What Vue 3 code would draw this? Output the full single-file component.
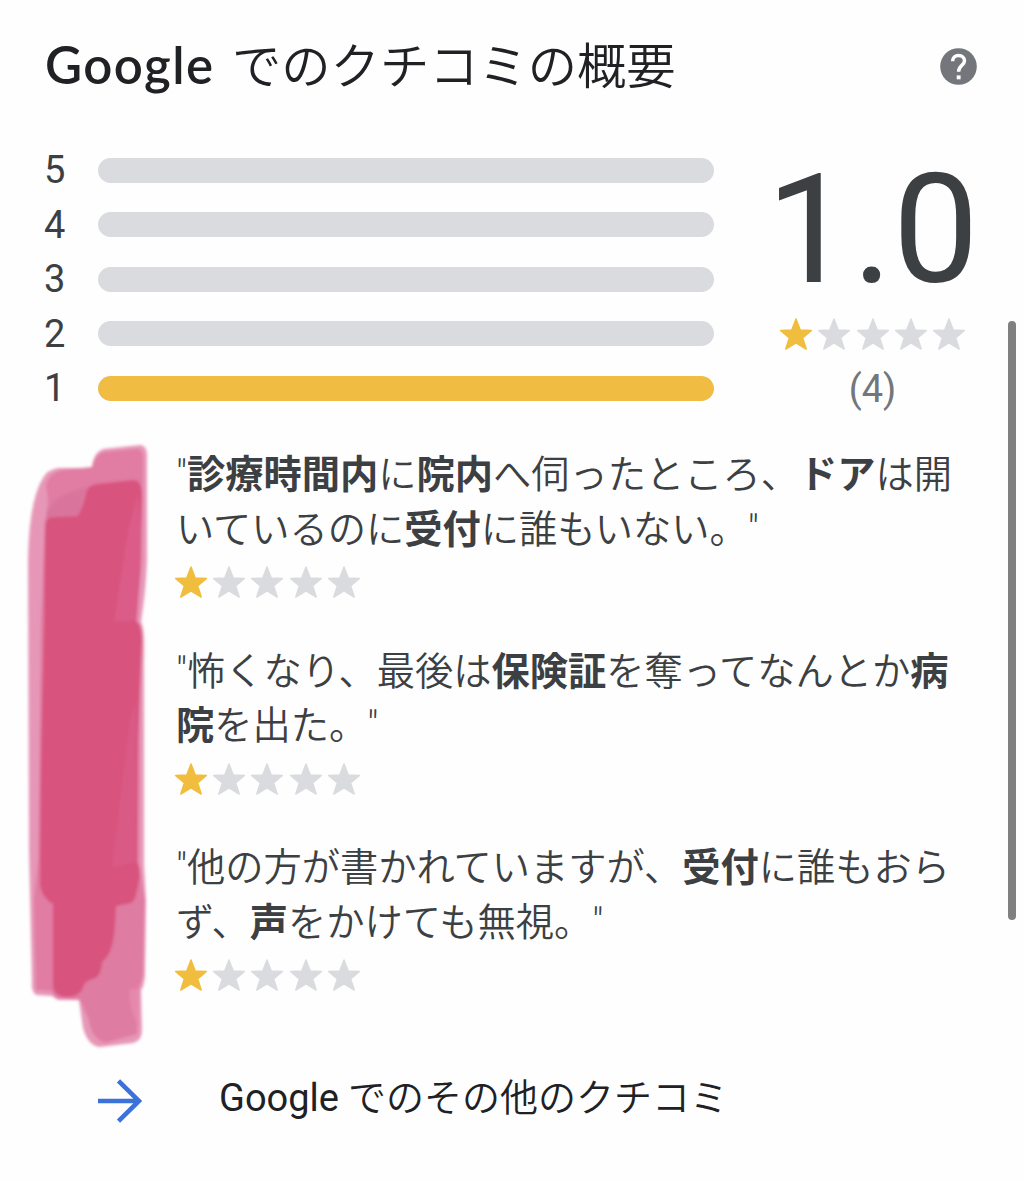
<script setup>
import { h } from 'vue'

const bars = [
  { label: 5, fill: 0 },
  { label: 4, fill: 0 },
  { label: 3, fill: 0 },
  { label: 2, fill: 0 },
  { label: 1, fill: 100 },
]

// Each line is a list of runs; runs with b: true are highlighted keywords.
const reviews = [
  [
    [{ t: '"' }, { t: '診療時間内', b: true }, { t: 'に' }, { t: '院内', b: true }, { t: 'へ伺ったところ、' }, { t: 'ドア', b: true }, { t: 'は開' }],
    [{ t: 'いているのに' }, { t: '受付', b: true }, { t: 'に誰もいない。"' }],
  ],
  [
    [{ t: '"怖くなり、最後は' }, { t: '保険証', b: true }, { t: 'を奪ってなんとか' }, { t: '病', b: true }],
    [{ t: '院', b: true }, { t: 'を出た。"' }],
  ],
  [
    [{ t: '"他の方が書かれていますが、' }, { t: '受付', b: true }, { t: 'に誰もおら' }],
    [{ t: 'ず、' }, { t: '声', b: true }, { t: 'をかけても無視。"' }],
  ],
]

const starPath =
  'M16 1 L20.2 12.1 L31.4 12.5 L22.6 19.8 L26.2 31 L16 24.8 L5.8 31 L9.4 19.8 L.6 12.5 L11.8 12.1 Z'

const Stars = () =>
  h(
    'div',
    { style: { display: 'flex', gap: '6.2px' }, role: 'img' },
    [1, 2, 3, 4, 5].map((n) =>
      h('svg', { width: 32, height: 32, viewBox: '0 0 32 32', style: { display: 'block', overflow: 'visible' } }, [
        h('path', {
          d: starPath,
          fill: n <= 1 ? '#f1bd3e' : '#dadbdf',
          stroke: n <= 1 ? '#f1bd3e' : '#dadbdf',
          'stroke-width': 1.5,
          'stroke-linejoin': 'round',
        }),
      ])
    )
  )
</script>

<template>
  <main class="page">
    <header class="header">
      <h1 class="title"><span class="brand">Google</span><span class="kana">でのクチコミの概要</span></h1>
      <svg class="help" width="37" height="37" viewBox="0 0 37 37">
        <circle cx="18.5" cy="18.5" r="18.3" fill="#73767a" />
        <path d="M12.6 13.3 C12.6 9.7 15.2 7.4 18.6 7.4 C22 7.4 24.5 9.8 24.5 12.8 C24.5 17.4 18.6 17.4 18.6 23.8" fill="none" stroke="#fff" stroke-width="3.5" />
        <rect x="16.7" y="27.4" width="3.9" height="3.9" fill="#fff" />
      </svg>
    </header>

    <section class="summary">
      <div class="bars">
        <div v-for="bar in bars" :key="bar.label" class="bar-row">
          <span class="bar-label">{{ bar.label }}</span>
          <div class="track"><div class="fill" :style="{ width: bar.fill + '%' }"></div></div>
        </div>
      </div>
      <div class="score">
        <div class="score-value">1.0</div>
        <Stars class="score-stars" />
        <div class="score-count">(4)</div>
      </div>
    </section>

    <section class="reviews">
      <svg class="marker" width="176" height="620" viewBox="0 435 176 620">
        <defs>
          <filter id="soft" x="-10%" y="-5%" width="120%" height="110%"><feGaussianBlur stdDeviation="1.6" /></filter>
        </defs>
        <g filter="url(#soft)">
          <path fill="#e697b7" d="M92 468 Q93 453 103 449 L140 445 Q148 445 147 460 L147 560 Q146 590 141 622 Q145 628 144 660 L144 865 L146 900 L145 975 Q144 987 141 990 L142 1030 Q142 1041 133 1043 L100 1047 Q88 1046 83 1028 L79 1000 L58 1000 L52 996 L36 995 Q31 991 32 982 L29 850 L28 560 Q29 500 43 478 Q47 470 58 468 Z" />
          <path fill="#e17ba3" d="M46 486 Q48 474 62 470 L92 467 Q94 455 104 452 L138 449 Q144 450 143 464 L142 560 L137 622 L140 640 L139 865 L145 900 L143 975 L139 988 L137 1034 L105 1043 Q91 1038 89 1020 L80 1000 L56 998 L51 991 L36 990 L34 900 L38 860 L41 620 L45 520 Q50 505 46 486 Z" />
          <path fill="#df7ba2" d="M115 905 L142 900 L141 980 L129 988 L137 1034 L105 1041 Q90 1038 88 1010 L80 984 L100 960 Z" />
          <path fill="#d8527d" d="M45 526 Q45 517 54 517 L78 516 Q84 505 86 492 Q88 485 97 484 L134 480 Q143 481 142 500 L140 570 L136 621 Q142 624 142 640 L138 740 L137 862 Q140 866 140 876 L136 895 Q134 904 126 904 L116 906 Q115 935 112 945 Q109 957 102 962 Q101 978 92 979 Q84 981 82 990 Q78 997 66 997 Q53 996 53 985 L53 904 Q42 898 40 884 L41 760 L44 625 Z" />
          <path fill="#dc608c" opacity=".75" d="M128 530 L138 492 L141 530 L135 621 L114 621 Z" />
          <path fill="#dc608c" opacity=".65" d="M130 720 L136 700 L135 862 L112 868 L120 800 Z" />
          <path fill="#c8688f" opacity=".3" d="M46 512 Q58 493 86 488 L79 515 L46 518 Z" />
          <path fill="#e790b1" opacity=".65" d="M129 990 L140 988 L140 1027 Q130 1015 129 990 Z" />
        </g>
      </svg>
      <div class="review-list">
        <article v-for="(review, i) in reviews" :key="i" class="review">
          <p v-for="(line, j) in review" :key="j" class="line"><span v-for="(run, k) in line" :key="k" :class="{ strong: run.b }">{{ run.t }}</span></p>
          <Stars class="review-stars" />
        </article>
      </div>
    </section>

    <footer class="more">
      <svg class="arrow" width="44" height="44" viewBox="0 0 44 44">
        <path d="M0 22 H41 M20.5 1.8 L41 22 L20.5 42.2" fill="none" stroke="#3b72d9" stroke-width="4.6" />
      </svg>
      <span class="more-text"><span class="more-brand">Google</span><span>でのその他のクチコミ</span></span>
    </footer>

    <div class="scrollbar"></div>
  </main>
</template>

<style>
body {
  margin: 0;
  background: #fff;
}
</style>

<style scoped>
.page {
  position: relative;
  box-sizing: border-box;
  width: 1024px;
  height: 1182px;
  overflow: hidden;
  background: #fefefe;
  color: #3c4043;
  font-family: Roboto, 'Noto Sans CJK JP', sans-serif;
}
.header {
  display: flex;
  align-items: center;
  justify-content: space-between;
  height: 132px;
  padding: 0 47px 0 45px;
}
.title {
  display: flex;
  align-items: baseline;
  margin: 0;
  padding-bottom: 5px;
  color: #202124;
  font-weight: 400;
  white-space: nowrap;
}
.brand {
  width: 187px;
  font: 600 51px/60px Lato, sans-serif;
  letter-spacing: 1.4px;
}
.kana {
  font: 350 49.3px/60px 'Noto Sans CJK JP', sans-serif;
}
.help {
  display: block;
}
.summary {
  display: flex;
  height: 303px;
}
.bars {
  width: 714px;
  padding-top: 11px;
}
.bar-row {
  display: flex;
  align-items: center;
  height: 54.5px;
}
.bar-label {
  width: 54px;
  padding-left: 44px;
  font-size: 38px;
  line-height: 50px;
}
.track {
  width: 616px;
  height: 25px;
  overflow: hidden;
  border-radius: 13px;
  background: #dadbdf;
}
.fill {
  height: 100%;
  border-radius: 13px;
  background: #f0bc41;
}
.score {
  display: flex;
  flex-direction: column;
  align-items: center;
  width: 310px;
  padding-left: 5px;
  margin-left: 2px;
}
.score-value {
  height: 186px;
  font-size: 153px;
  line-height: 195px;
}
.score-count {
  margin-top: 15px;
  color: #73767a;
  font-size: 38px;
  line-height: 48px;
}
.score-stars {
  flex: none;
}
.reviews {
  display: flex;
  height: 620px;
}
.marker {
  flex: none;
}
.review-list {
  padding-top: 13px;
}
.review {
  height: 196.5px;
}
.line {
  height: 54.5px;
  margin: 0;
  font-family: Roboto, 'Noto Sans CJK JP', sans-serif;
  font-size: 38.25px;
  font-weight: 350;
  line-height: 55px;
  white-space: nowrap;
}
.strong {
  font-weight: 700;
}
.review-stars {
  margin: 9px 0 0 -1px;
}
.more {
  display: flex;
  align-items: center;
  height: 92px;
  padding-left: 98px;
}
.arrow {
  flex: none;
}
.more-text {
  display: flex;
  align-items: baseline;
  margin-left: 77px;
  padding-bottom: 6px;
  color: #202124;
  font-size: 38px;
  line-height: 50px;
  font-weight: 350;
  white-space: nowrap;
}
.more-brand {
  width: 129px;
  font-weight: 400;
}
.scrollbar {
  position: absolute;
  top: 321px;
  right: 8px;
  width: 8px;
  height: 599px;
  border-radius: 4px;
  background: #808080;
}
</style>
